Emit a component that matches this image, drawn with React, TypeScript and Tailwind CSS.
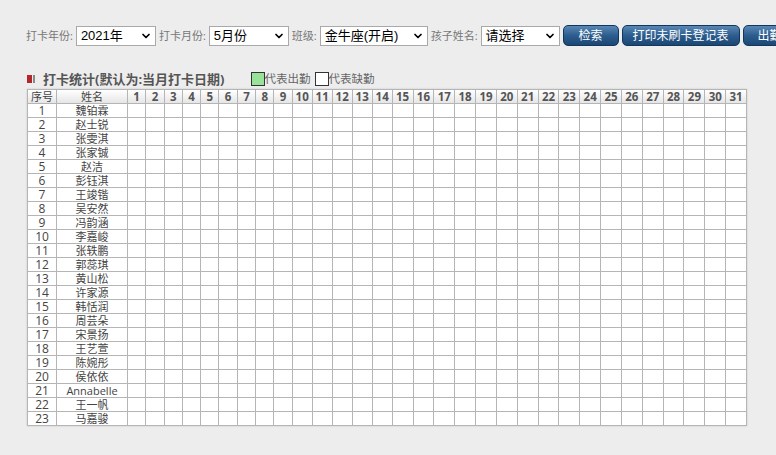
import { ChevronDown } from 'lucide-react';

const names = [
	'魏铂霖',
	'赵士锐',
	'张雯淇',
	'张家铖',
	'赵洁',
	'彭钰淇',
	'王竣锴',
	'吴安然',
	'冯韵涵',
	'李嘉峻',
	'张轶鹏',
	'郭蕊琪',
	'黄山松',
	'许家源',
	'韩恬润',
	'周芸朵',
	'宋景扬',
	'王艺萱',
	'陈婉彤',
	'侯依依',
	'Annabelle',
	'王一帆',
	'马嘉骏',
];

const days = Array.from({ length: 31 }, (_, i) => i + 1);

const font = 'font-["Open_Sans","Noto_Sans_CJK_SC",sans-serif]';

type FakeSelectProps = { value: string; width: string };

const FakeSelect = ({ value, width }: FakeSelectProps) => (
	<div
		className={`flex h-[20px] ${width} shrink-0 items-center justify-between border border-[#a9a9a9] bg-white pl-[4px] pr-[3px] font-["Liberation_Sans","Noto_Sans_CJK_SC",sans-serif] text-[13px] leading-none text-black`}
	>
		<span>{value}</span>
		<ChevronDown className="h-[12px] w-[12px] text-black" strokeWidth={3.5} />
	</div>
);

const Label = ({ children }: { children: string }) => (
	<span className="shrink-0 text-[11px] leading-none text-[#777]">{children}</span>
);

const BlueButton = ({ children, width }: { children: string; width: string }) => (
	<button
		className={`h-[21px] ${width} shrink-0 rounded-[5px] border border-[#12375e] bg-gradient-to-b from-[#5a88b5] via-[#2c5d8e] to-[#1c4774] text-[12px] leading-none text-white`}
	>
		{children}
	</button>
);

const cell = 'border border-[#b5b5b5] p-0';

export default function App() {
	return (
		<div className={`h-[455px] w-[776px] overflow-hidden bg-[#ededed] ${font}`}>
			<div className="flex items-center gap-[3px] whitespace-nowrap pl-[26px] pt-[25px]">
				<Label>打卡年份:</Label>
				<FakeSelect value="2021年" width="w-[80px]" />
				<Label>打卡月份:</Label>
				<FakeSelect value="5月份" width="w-[80px]" />
				<Label>班级:</Label>
				<FakeSelect value="金牛座(开启)" width="w-[108px]" />
				<Label>孩子姓名:</Label>
				<FakeSelect value="请选择" width="w-[79px]" />
				<BlueButton width="w-[56px]">检索</BlueButton>
				<BlueButton width="w-[118px]">打印未刷卡登记表</BlueButton>
				<BlueButton width="w-[90px]">出勤统计表</BlueButton>
			</div>

			<div className="mt-[24px] flex h-[18px] items-center pl-[27px]">
				<span className="h-[8px] w-[5px] bg-[#b3262a]" />
				<span className="ml-[1px] h-[8px] w-[2px] bg-[#8a8a8a]" />
				<span className="ml-[8px] text-[13px] font-bold leading-none text-[#555]">
					打卡统计(默认为:当月打卡日期)
				</span>
				<span className="ml-[26px] h-[14px] w-[14px] border border-[#333] bg-[#99e399]" />
				<span className="text-[11.5px] leading-none text-[#666]">代表出勤</span>
				<span className="ml-[4px] h-[14px] w-[14px] border border-[#333] bg-white" />
				<span className="text-[11.5px] leading-none text-[#666]">代表缺勤</span>
			</div>

			<table className="ml-[27px] mt-[1px] w-[720px] table-fixed border-collapse bg-white shadow-[0_0_2px_rgba(0,0,0,0.15)]">
				<colgroup>
					<col className="w-[29px]" />
					<col className="w-[71px]" />
					{days.map((d) => (
						<col
							key={d}
							className={d < 10 ? 'w-[18.3px]' : d < 15 ? 'w-[20px]' : 'w-[20.85px]'}
						/>
					))}
				</colgroup>
				<thead>
					<tr className="h-[13.9px] bg-gradient-to-b from-white to-[#e4e4e4]">
						<th className={`${cell} text-[11px] font-normal leading-[13px] text-[#444]`}>
							序号
						</th>
						<th className={`${cell} text-[11px] font-normal leading-[13px] text-[#444]`}>
							姓名
						</th>
						{days.map((d) => (
							<th
								key={d}
								className={`${cell} text-[11.5px] font-bold leading-[13px] text-[#555]`}
							>
								{d}
							</th>
						))}
					</tr>
				</thead>
				<tbody>
					{names.map((name, i) => (
						<tr key={name} className="h-[13.9px]">
							<td className={`${cell} text-center text-[12px] leading-[13px] text-[#444]`}>
								{i + 1}
							</td>
							<td className={`${cell} text-center text-[11px] leading-[13px] text-[#444]`}>
								{name}
							</td>
							{days.map((d) => (
								<td key={d} className={cell} />
							))}
						</tr>
					))}
				</tbody>
			</table>
		</div>
	);
}
